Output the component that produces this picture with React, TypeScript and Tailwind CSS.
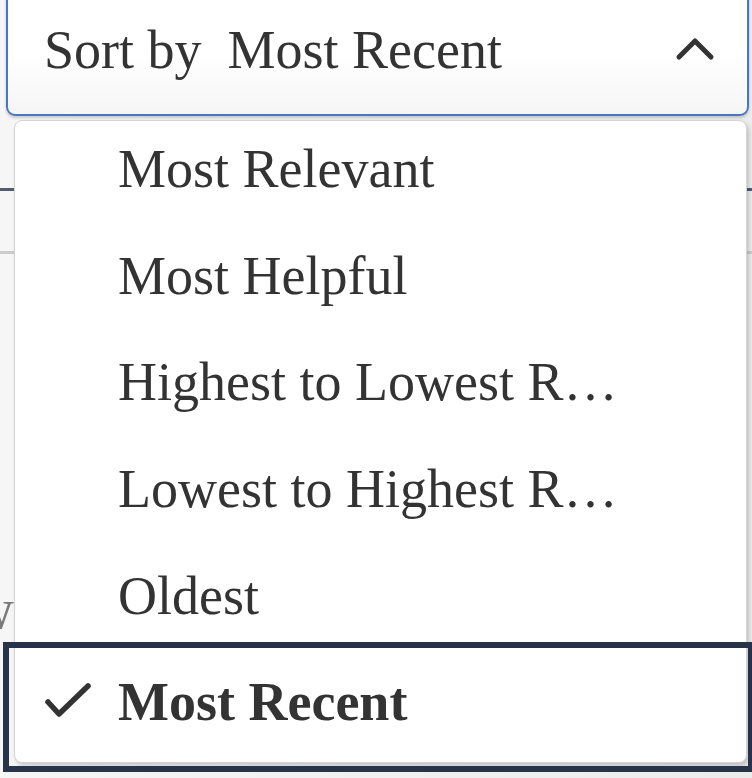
import React from "react";

const options = [
  "Most Relevant",
  "Most Helpful",
  "Highest to Lowest R…",
  "Lowest to Highest R…",
  "Oldest",
  "Most Recent",
];

const selected = "Most Recent";

function ChevronUp() {
  return (
    <svg width="40" height="26" viewBox="0 0 40 26" fill="none">
      <polyline
        points="4,20 20,4 36,20"
        stroke="#333333"
        strokeWidth="5"
        strokeLinecap="round"
        strokeLinejoin="round"
      />
    </svg>
  );
}

function Check() {
  return (
    <svg width="46" height="38" viewBox="0 0 46 38" fill="none">
      <polyline
        points="3,19 14,31 43,3"
        stroke="#333333"
        strokeWidth="5.5"
        strokeLinecap="round"
        strokeLinejoin="round"
      />
    </svg>
  );
}

export default function App() {
  return (
    <div
      className="relative w-[752px] h-[778px] overflow-hidden bg-gradient-to-r from-[#f6f6f6] to-[#ececec] text-[#333333]"
      style={{ fontFamily: '"Liberation Serif", "Times New Roman", serif' }}
    >
      {/* page content behind the dropdown */}
      <div className="pt-[188px]">
        <div className="h-[3px] bg-[#545a70]" />
        <div className="h-[60px]" />
        <div className="h-[3px] bg-[#cccccc]" />
        <div className="mt-[326px] -ml-[28px] text-[58px] leading-none text-[#7a7a7a]">w</div>
      </div>

      {/* select button */}
      <button className="absolute left-[6px] top-[-12px] w-[743px] h-[128px] rounded-[9px] border-2 border-[#4a76c0] bg-gradient-to-b from-white via-white to-[#f5f5f5] flex items-center justify-between pl-[36px] pr-[32px] pb-[4px] shadow-[0_2px_3px_rgba(0,0,0,0.18)]">
        <span className="text-[54px] leading-none">
          Sort by<span className="ml-[26px]">Most Recent</span>
        </span>
        <ChevronUp />
      </button>

      {/* menu */}
      <div className="absolute left-[14px] top-[120px] w-[733px] h-[643px] rounded-[8px] bg-white border border-[#d4d4d4] shadow-[2px_3px_4px_rgba(0,0,0,0.18)]">
        {options.map((o, i) => {
          const isSel = o === selected;
          return (
            <div key={o} className="flex items-center h-[106.6px] pb-[10px]">
              <div className="w-[103px] pl-[30px] flex items-center">
                {isSel && <Check />}
              </div>
              <span className={`text-[54px] leading-none whitespace-nowrap ${isSel ? "font-bold" : ""}`}>
                {o}
              </span>
            </div>
          );
        })}
      </div>

      {/* focus ring on selected option */}
      <div className="absolute left-[3px] top-[642px] w-[751px] h-[130px] border-[6px] border-[#283248] pointer-events-none" />
    </div>
  );
}
